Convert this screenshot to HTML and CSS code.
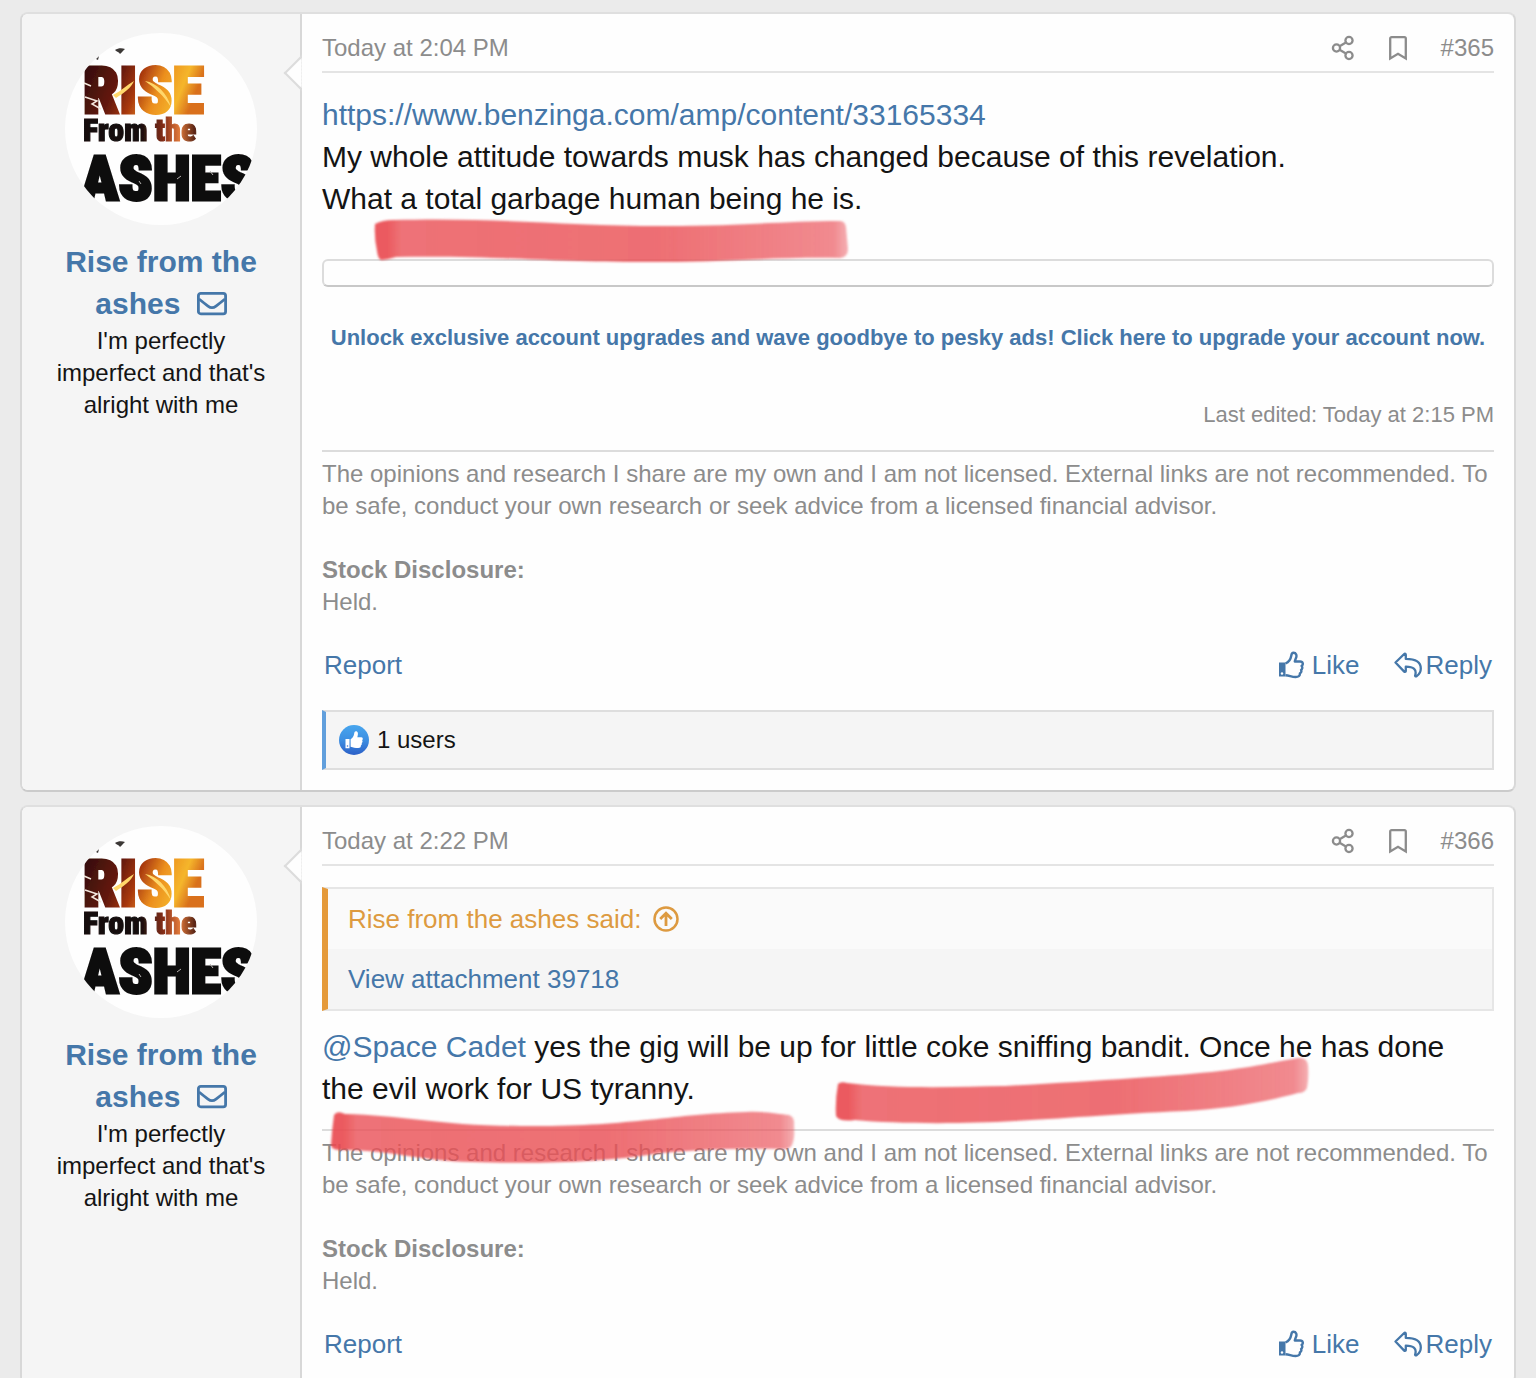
FILE: index.html
```html
<!DOCTYPE html>
<html lang="en">
<head>
    <meta charset="UTF-8">
    <meta name="viewport" content="width=device-width, initial-scale=1.0">
    <title>Thread</title>
    <link rel="stylesheet" href="styles.css">
</head>
<body>
    <!-- shared icons -->
    <svg class="sprite" aria-hidden="true">
        <defs>
            <linearGradient id="fire" x1="0" y1="0" x2="1" y2="0.25">
                <stop offset="0" stop-color="#2a0b0a"/>
                <stop offset="0.35" stop-color="#64190f"/>
                <stop offset="0.52" stop-color="#a8380f"/>
                <stop offset="0.7" stop-color="#ec8f1e"/>
                <stop offset="0.88" stop-color="#f5b62c"/>
                <stop offset="1" stop-color="#d9701c"/>
            </linearGradient>
            <linearGradient id="ember" x1="0" y1="0" x2="1" y2="0">
                <stop offset="0.5" stop-color="#120c0b"/>
                <stop offset="0.72" stop-color="#8a2f18"/>
                <stop offset="0.85" stop-color="#e0793a"/>
                <stop offset="1" stop-color="#4a1a10"/>
            </linearGradient>
            <linearGradient id="like-blue" x1="0" y1="0" x2="0" y2="1">
                <stop offset="0" stop-color="#48a6ee"/>
                <stop offset="0.5" stop-color="#3d8fe2"/>
                <stop offset="1" stop-color="#2b5fc7"/>
            </linearGradient>
            <linearGradient id="marker-ink" x1="0" y1="0" x2="1" y2="0">
                <stop offset="0" stop-color="#ea4a50" stop-opacity="0.9"/>
                <stop offset="0.03" stop-color="#ea4a50" stop-opacity="0.9"/>
                <stop offset="0.055" stop-color="#ea4f55" stop-opacity="0.8"/>
                <stop offset="0.6" stop-color="#ea5055" stop-opacity="0.82"/>
                <stop offset="0.97" stop-color="#ea4f57" stop-opacity="0.66"/>
                <stop offset="1" stop-color="#ea4f57" stop-opacity="0.45"/>
            </linearGradient>
            <filter id="marker-soft"><feGaussianBlur stdDeviation="0.9"/></filter>
            <filter id="photo-soft"><feGaussianBlur stdDeviation="0.6"/></filter>
        </defs>
        <symbol id="icon-share" viewBox="0 0 24 26">
            <g fill="none" stroke="currentColor" stroke-width="2.3">
                <circle cx="5.5" cy="13" r="3.6"/>
                <circle cx="18" cy="5.5" r="3.6"/>
                <circle cx="18" cy="20.5" r="3.6"/>
                <path d="M8.6 11.2 14.9 7.4M8.6 14.8l6.3 3.8"/>
            </g>
        </symbol>
        <symbol id="icon-bookmark" viewBox="1 0 18 26">
            <path d="M2.2 23.4V3.6a1.4 1.4 0 0 1 1.4-1.4h12.8a1.4 1.4 0 0 1 1.4 1.4v19.8L10 18.8z" fill="none" stroke="currentColor" stroke-width="2.3"/>
        </symbol>
        <symbol id="icon-mail" viewBox="0 0 30 24">
            <rect x="1.4" y="1.4" width="27.2" height="20.4" rx="2.4" fill="none" stroke="currentColor" stroke-width="2.8"/>
            <path d="M2 7c3.2 2.6 6 4.8 9 7.1 3 2.3 5 2.3 8 0 3-2.3 5.8-4.5 9-7.1" fill="none" stroke="currentColor" stroke-width="2.8"/>
        </symbol>
        <symbol id="icon-thumb" viewBox="0 0 26 28">
            <path d="M1 11.5h6.5v14H1z" fill="currentColor"/>
            <circle cx="4" cy="22.5" r="1.2" fill="#fefefe"/>
            <path d="M7.5 12.5c3.5-1.5 5.2-4.5 5.7-7.5.3-2 .8-3.2 2.3-3.2 2.7 0 3.6 2.6 2.5 5.2-.6 1.5-1 2.3-1.2 3.500h5.400c3 0 3.300 3 1.400 4.400 1.200 1.300.8 3.200-.5 4 .6 1.500 0 2.900-1.200 3.500.1 2.500-1.400 3.600-4.200 3.600-4.300 0-6-1.500-10.200-1.800" fill="none" stroke="currentColor" stroke-width="2.4" stroke-linejoin="round"/>
        </symbol>
        <symbol id="icon-reply" viewBox="0 0 28 26">
            <path d="M1.5 10.5 10.2 2c.7-.6 1.6-.2 1.6.7v4.200c9 0 15 2.600 15 9.600 0 3.700-1.900 6.200-4.300 7.700-.8.5-1.600-.1-1.300-1 1.700-5.600-1.400-8.400-9.400-8.500v4.200c0 .9-.9 1.300-1.600.7z" fill="none" stroke="currentColor" stroke-width="2.3" stroke-linejoin="round"/>
        </symbol>
        <symbol id="icon-up" viewBox="0 0 26 26">
            <g fill="none" stroke="currentColor" stroke-width="2.5">
                <circle cx="13" cy="13" r="11.5"/>
                <path d="M13 20V7.500M7.200 13 13 7.200l5.800 5.800" stroke-width="2.8"/>
            </g>
        </symbol>
        <symbol id="icon-liked" viewBox="0 0 30 30">
            <circle cx="15" cy="15" r="15" fill="url(#like-blue)"/>
            <path d="M6.5 14h4v9.200h-4zM11.600 14.200c2-1.300 3.200-3 3.500-5.200.2-1.700.6-2.800 1.800-2.800 2.200 0 2.600 2.500 1.400 6h3.800c2 0 2.200 2.200 1 3 .8 1 .5 2.300-.4 2.800.4 1.100 0 2-.8 2.500.1 1.700-.8 2.500-2.700 2.500-3.100 0-4.900-.3-7.600-1.200z" fill="#fff"/>
            <circle cx="8.5" cy="21" r=".8" fill="#3577d4"/>
        </symbol>
        <symbol id="avatar-art" viewBox="0 0 192 192">
            <rect width="192" height="192" fill="#fefefe"/>
            <g class="avatar-text" filter="url(#photo-soft)">
                <path d="M50 17c3-2 7-2 10-1-2 2-3 3-5 5-1-2-3-2-5-4zM31 26l3-3-1 4z" fill="#3b3736"/>
                <text class="avatar-rise" x="18" y="80" fill="url(#fire)" stroke="url(#fire)">RISE</text>
                <path d="M48 62c8-4 14-10 21-14-3 7-10 12-18 17zM80 48c12 2 22 12 26 26-8-12-16-19-26-26z" fill="#ffd76b"/>
                <path d="M20 64l12 4-5 3 9 5M19 50l7 3" fill="none" stroke="#f3e7dd" stroke-width="1.5"/>
                <text class="avatar-from" x="18" y="108" fill="url(#ember)" stroke="url(#ember)">From the</text>
                <text class="avatar-ashes" x="16" y="167" fill="#0b0a0a" stroke="#0b0a0a">ASHES</text>
                <path d="M74 148l2 3M112 146l4-3M145 138l3 4" stroke="#b9b5b3"/>
            </g>
        </symbol>
    </svg>

    <main class="thread">
        <article class="post">
            <aside class="post-user">
                <svg class="avatar" role="img" aria-label="Rise from the ashes"><use href="#avatar-art"/></svg>
                <h4 class="user-name"><a href="#">Rise from the ashes</a> <a class="user-mail" href="#" aria-label="Message"><svg><use href="#icon-mail"/></svg></a></h4>
                <div class="user-title">I'm perfectly imperfect and that's alright with me</div>
            </aside>
            <div class="post-main">
                <header class="post-header">
                    <a href="#">Today at 2:04 PM</a>
                    <div class="post-tools">
                        <a href="#" aria-label="Share"><svg class="icon-share"><use href="#icon-share"/></svg></a>
                        <a href="#" aria-label="Bookmark"><svg class="icon-bookmark"><use href="#icon-bookmark"/></svg></a>
                        <a href="#">#365</a>
                    </div>
                </header>
                <div class="post-content">
                    <div class="post-text">
                        <a href="#">https://www.benzinga.com/amp/content/33165334</a><br>
                        My whole attitude towards musk has changed because of this revelation.<br>
                        What a total garbage human being he is.
                    </div>
                    <svg class="marker marker-garbage" viewBox="0 0 476 46" aria-hidden="true">
                        <path d="M1 5Q8 1 20 1C120-2 190 7 290 7C370 7 410 2 466 2Q471 2 472 8L474 30Q474 38 466 39C400 38 350 43 290 43C180 44 120 36 22 38Q12 41 7 41Q4 40 3 32Q0 18 1 5Z"/>
                    </svg>
                </div>
                <div class="ad-box"></div>
                <a class="upgrade" href="#">Unlock exclusive account upgrades and wave goodbye to pesky ads! Click here to upgrade your account now.</a>
                <div class="last-edit">Last edited: Today at 2:15 PM</div>
                <div class="signature">
                    The opinions and research I share are my own and I am not licensed. External links are not recommended. To be safe, conduct your own research or seek advice from a licensed financial advisor.<br><br>
                    <b>Stock Disclosure:</b><br>
                    Held.
                </div>
                <footer class="actions">
                    <a href="#">Report</a>
                    <div class="actions-right">
                        <a href="#"><svg class="icon-thumb"><use href="#icon-thumb"/></svg>Like</a>
                        <a href="#"><svg class="icon-reply"><use href="#icon-reply"/></svg>Reply</a>
                    </div>
                </footer>
                <div class="reactions">
                    <svg><use href="#icon-liked"/></svg>
                    <a href="#">1 users</a>
                </div>
            </div>
        </article>

        <article class="post">
            <aside class="post-user">
                <svg class="avatar" role="img" aria-label="Rise from the ashes"><use href="#avatar-art"/></svg>
                <h4 class="user-name"><a href="#">Rise from the ashes</a> <a class="user-mail" href="#" aria-label="Message"><svg><use href="#icon-mail"/></svg></a></h4>
                <div class="user-title">I'm perfectly imperfect and that's alright with me</div>
            </aside>
            <div class="post-main">
                <header class="post-header">
                    <a href="#">Today at 2:22 PM</a>
                    <div class="post-tools">
                        <a href="#" aria-label="Share"><svg class="icon-share"><use href="#icon-share"/></svg></a>
                        <a href="#" aria-label="Bookmark"><svg class="icon-bookmark"><use href="#icon-bookmark"/></svg></a>
                        <a href="#">#366</a>
                    </div>
                </header>
                <div class="post-content">
                    <blockquote class="quote">
                        <a class="quote-title" href="#">Rise from the ashes said: <svg><use href="#icon-up"/></svg></a>
                        <div class="quote-body"><a href="#">View attachment 39718</a></div>
                    </blockquote>
                    <div class="post-text">
                        <a href="#">@Space Cadet</a> yes the gig will be up for little coke sniffing bandit. Once he has done the evil work for US tyranny.
                    </div>
                    <svg class="marker marker-bandit" viewBox="0 0 476 68" aria-hidden="true">
                        <path d="M3 26Q6 23 12 25C60 31 120 29 170 28C260 23 340 18 385 13C420 9 440 4 463 0Q472-1 473 7Q474 20 472 30Q470 35 463 35C430 44 390 51 350 53C280 56 220 61 180 63C130 66 60 66 20 62Q4 64 1 58Q0 42 3 26Z"/>
                    </svg>
                    <svg class="marker marker-tyranny" viewBox="0 0 464 54" aria-hidden="true">
                        <path d="M3 4Q6-1 14 3C70 4 110 15 190 15C300 16 340 3 415 1C435 0 448 3 458 4Q464 6 463 14Q464 28 461 34Q459 39 450 38C410 37 370 38 330 42C270 52 200 53 140 51C90 50 60 39 10 39Q0 39 0 34Q1 18 3 4Z"/>
                    </svg>
                </div>
                <div class="signature">
                    The opinions and research I share are my own and I am not licensed. External links are not recommended. To be safe, conduct your own research or seek advice from a licensed financial advisor.<br><br>
                    <b>Stock Disclosure:</b><br>
                    Held.
                </div>
                <footer class="actions">
                    <a href="#">Report</a>
                    <div class="actions-right">
                        <a href="#"><svg class="icon-thumb"><use href="#icon-thumb"/></svg>Like</a>
                        <a href="#"><svg class="icon-reply"><use href="#icon-reply"/></svg>Reply</a>
                    </div>
                </footer>
            </div>
        </article>
    </main>
</body>
</html>
```
FILE: styles.css
```css
*, *::after {
    box-sizing: border-box;
}
body {
    margin: 0;
    background-color: #ebebeb;
    color: #141414;
    font-family: "Liberation Sans", Arial, sans-serif;
    font-size: 24px;
    line-height: 32px;
}
a {
    color: #4577a9;
    text-decoration: none;
}
.sprite {
    position: absolute;
    width: 0;
    height: 0;
}
.thread {
    height: 100vh;
    overflow: hidden;
    padding: 12px 20px 0;
}
.post {
    display: flex;
    margin-bottom: 13px;
    border: 2px solid #d8d8d8;
    border-top-color: #dfdfdf;
    border-bottom-color: #cbcbcb;
    border-radius: 8px;
    background-color: #fefefe;
}

/* user column */
.post-user {
    position: relative;
    flex: 0 0 280px;
    padding: 19px 28px;
    border-right: 2px solid #d8d8d8;
    border-radius: 6px 0 0 6px;
    background-color: #f5f5f5;
    text-align: center;
}
.post-user::after {
    content: "";
    position: absolute;
    top: 46px;
    right: -15px;
    width: 26px;
    height: 26px;
    border: 2px solid #dcdcdc;
    border-top-color: transparent;
    border-right-color: transparent;
    background: linear-gradient(45deg, #fefefe 50%, transparent 50%);
    transform: rotate(45deg);
}
.avatar {
    display: block;
    width: 192px;
    height: 192px;
    margin: 0 auto 16px;
    border-radius: 50%;
}
.avatar-text {
    font-family: "Roboto Condensed", Roboto, sans-serif;
    font-weight: 900;
}
.avatar-rise {
    font-size: 64px;
    stroke-width: 3px;
}
.avatar-from {
    font-size: 32px;
    stroke-width: 1px;
}
.avatar-ashes {
    font-size: 62px;
    stroke-width: 3px;
}
.user-name {
    margin: 0;
    font-size: 30px;
    line-height: 42px;
}
.user-mail {
    margin-left: 8px;
}
.user-mail svg {
    width: 30px;
    height: 24px;
    vertical-align: -2px;
}

/* message column */
.post-main {
    flex: 1;
    min-width: 0;
    padding: 16px 20px 20px;
}
.post-header {
    display: flex;
    justify-content: space-between;
    margin-bottom: 21px;
    padding-bottom: 5px;
    border-bottom: 2px solid #e4e4e4;
    line-height: 36px;
}
.post-header a {
    color: #8c8c8c;
}
.post-tools {
    display: flex;
    gap: 34px;
}
.post-tools svg {
    display: block;
    height: 26px;
    margin-top: 5px;
}
.icon-share {
    width: 24px;
}
.icon-bookmark {
    width: 18px;
}
.post-content {
    position: relative;
}
.post-text {
    font-size: 30px;
    line-height: 42px;
}
.marker {
    position: absolute;
    overflow: visible;
    fill: url(#marker-ink);
    filter: url(#marker-soft);
}
.marker-garbage {
    top: 125px;
    left: 52px;
    width: 476px;
}
.marker-bandit {
    top: 171px;
    left: 513px;
    width: 476px;
}
.marker-tyranny {
    top: 224px;
    left: 9px;
    width: 464px;
}
.ad-box {
    height: 28px;
    margin: 39px 0 35px;
    border: 2px solid #dcdcdc;
    border-bottom-color: #c8c8c8;
    border-radius: 6px;
}
.upgrade {
    display: block;
    font-size: 22px;
    font-weight: bold;
    text-align: center;
}
.last-edit {
    margin-top: 45px;
    color: #8c8c8c;
    font-size: 22px;
    text-align: right;
}
.signature {
    margin-top: 19px;
    padding-top: 6px;
    border-top: 2px solid #dcdcdc;
    color: #8c8c8c;
}
.actions {
    display: flex;
    justify-content: space-between;
    margin-top: 29px;
    padding: 0 2px;
    font-size: 26px;
    line-height: 36px;
}
.actions-right {
    display: flex;
    gap: 34px;
}
.actions-right a {
    display: flex;
    align-items: center;
}
.icon-thumb {
    width: 26px;
    height: 28px;
    margin-right: 8px;
}
.icon-reply {
    width: 28px;
    height: 26px;
    margin-right: 4px;
}
.reactions {
    display: flex;
    align-items: center;
    gap: 8px;
    height: 60px;
    margin-top: 27px;
    padding: 0 13px;
    border: 2px solid #dedede;
    border-left: 4px solid #619fdc;
    background-color: #f5f5f5;
}
.reactions svg {
    width: 30px;
    height: 30px;
}
.reactions a {
    color: #141414;
}

/* quoted message */
.quote {
    margin: 0 0 15px;
    border: 2px solid #e6e6e6;
    border-left: 6px solid #e59a3a;
    font-size: 26px;
    line-height: 60px;
}
.quote-title {
    display: flex;
    align-items: center;
    gap: 12px;
    padding: 0 20px;
    background-color: #fafafa;
    color: #dd9a40;
}
.quote-title svg {
    width: 26px;
    height: 26px;
}
.quote-body {
    padding: 0 20px;
    background-color: #f5f5f5;
}
```
